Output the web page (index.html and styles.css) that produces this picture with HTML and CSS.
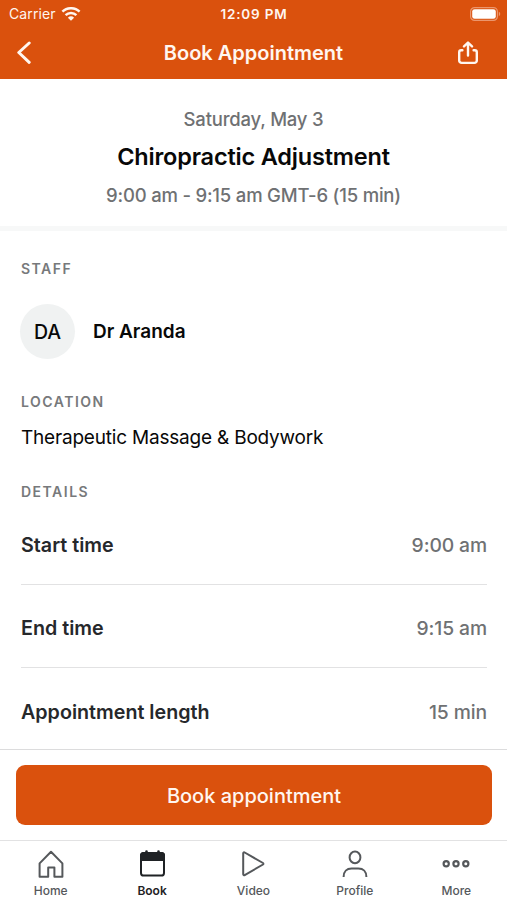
FILE: index.html
```html
<!DOCTYPE html>
<html lang="en">
<head>
  <meta charset="UTF-8">
  <meta name="viewport" content="width=device-width, initial-scale=1">
  <title>Book Appointment</title>
  <link rel="stylesheet" href="styles.css">
</head>
<body>
  <div class="app">
    <header class="header">
      <div class="status-bar">
        <div class="carrier">
          <span>Carrier</span>
          <svg class="wifi" width="20" height="14" viewBox="0 0 20 14" fill="none" stroke="currentColor" stroke-width="2.5">
            <path d="M1.4 4.7a12.4 12.4 0 0 1 17.2 0" />
            <path d="M4.6 8.2a7.8 7.8 0 0 1 10.8 0" />
            <path d="M10 13.8 6.9 10.7a4.5 4.5 0 0 1 6.2 0z" fill="currentColor" stroke="none" />
          </svg>
        </div>
        <span class="clock">12:09 PM</span>
        <svg class="battery" width="31" height="14" viewBox="0 0 31 14">
          <rect x=".6" y=".6" width="26.8" height="12.8" rx="4" fill="none" stroke="#eb966d" stroke-width="1.2" />
          <rect x="2.2" y="2.2" width="23.6" height="9.6" rx="2.4" fill="#fff" />
          <path d="M28.8 4.8a2.4 2.4 0 0 1 0 4.4z" fill="#eb966d" />
        </svg>
      </div>
      <div class="nav-bar">
        <button class="icon-btn" aria-label="Back">
          <svg width="16" height="24" viewBox="0 0 16 24" fill="none" stroke="currentColor" stroke-width="3" stroke-linecap="round" stroke-linejoin="round">
            <path d="M13.2 2 2.8 11.5l10.4 9.8" />
          </svg>
        </button>
        <h1>Book Appointment</h1>
        <button class="icon-btn" aria-label="Share">
          <svg width="22" height="24" viewBox="0 0 22 24" fill="none" stroke="currentColor" stroke-width="2.4" stroke-linecap="round" stroke-linejoin="round">
            <path d="M5.4 9.3H4.2a2 2 0 0 0-2 2v8.2a2.4 2.4 0 0 0 2.4 2.4h12.8a2.4 2.4 0 0 0 2.4-2.4v-8.2a2 2 0 0 0-2-2h-1.2" />
            <path d="M11 14.5V2M7 5.4 11 1.5l4 3.9" />
          </svg>
        </button>
      </div>
    </header>

    <section class="summary">
      <p class="summary-date">Saturday, May 3</p>
      <h2>Chiropractic Adjustment</h2>
      <p class="summary-time">9:00 am - 9:15 am GMT-6 (15 min)</p>
    </section>

    <main class="content">
      <h3>Staff</h3>
      <div class="staff">
        <div class="avatar">DA</div>
        <span class="staff-name">Dr Aranda</span>
      </div>

      <h3>Location</h3>
      <p class="location">Therapeutic Massage &amp; Bodywork</p>

      <h3>Details</h3>
      <dl class="details">
        <div class="row">
          <dt>Start time</dt>
          <dd>9:00 am</dd>
        </div>
        <div class="row">
          <dt>End time</dt>
          <dd>9:15 am</dd>
        </div>
        <div class="row">
          <dt>Appointment length</dt>
          <dd>15 min</dd>
        </div>
      </dl>
    </main>

    <div class="action">
      <button class="book-btn">Book appointment</button>
    </div>

    <nav class="tabs">
      <a class="tab">
        <svg width="30" height="30" viewBox="0 0 30 30" fill="none" stroke="currentColor" stroke-width="2" stroke-linejoin="round">
          <path d="M3.6 27.8V14.4L15 2.8l11.4 11.6v13.4h-8v-9.4h-6.2v9.4z" />
        </svg>
        <span>Home</span>
      </a>
      <a class="tab active">
        <svg width="30" height="30" viewBox="0 0 30 30" fill="none" stroke="currentColor" stroke-width="2" stroke-linecap="round">
          <rect x="4" y="4" width="23" height="22.5" rx="2.6" />
          <path d="M4 11.1V6.600a2.600 2.600 0 0 1 2.600-2.600h17.800a2.600 2.600 0 0 1 2.600 2.600v4.500z" fill="currentColor" />
          <path d="M9.500 4.500V2.500M21.500 4.500V2.500" stroke-width="2.600" />
        </svg>
        <span>Book</span>
      </a>
      <a class="tab">
        <svg width="30" height="30" viewBox="0 0 30 30" fill="none" stroke="currentColor" stroke-width="2" stroke-linejoin="round">
          <path d="M5.2 4.3v21a1 1 0 0 0 1.5.8L25 15.5a.9.9 0 0 0 0-1.5L6.7 3.5a1 1 0 0 0-1.5.8z" />
        </svg>
        <span>Video</span>
      </a>
      <a class="tab">
        <svg width="30" height="30" viewBox="0 0 30 30" fill="none" stroke="currentColor" stroke-width="2">
          <ellipse cx="15" cy="8.4" rx="5.4" ry="5.8" />
          <path d="M3.6 28c0-5.4 3.2-8.4 8-8.4h6.8c4.8 0 8 3 8 8.4" />
        </svg>
        <span>Profile</span>
      </a>
      <a class="tab">
        <svg width="30" height="30" viewBox="0 0 30 30" fill="none" stroke="currentColor" stroke-width="2.2">
          <circle cx="5.2" cy="14.8" r="2.6" />
          <circle cx="15" cy="14.8" r="2.6" />
          <circle cx="24.8" cy="14.8" r="2.6" />
        </svg>
        <span>More</span>
      </a>
    </nav>
  </div>
</body>
</html>
```

FILE: styles.css
```css
:root {
  --primary-color: #da510d;
  --text-color: #26282b;
  --muted-color: #6f7173;
  --border-color: #e2e2e3;
}

* {
  box-sizing: border-box;
}

body {
  margin: 0;
  font-family: Inter, "Liberation Sans", sans-serif;
  color: #080808;
  background: #fff;
}

h1, h2, h3, p, dl, dd {
  margin: 0;
}

button {
  border: none;
  padding: 0;
  font-family: inherit;
  cursor: pointer;
}

svg {
  display: block;
}

.app {
  display: flex;
  flex-direction: column;
  height: 900px;
  overflow: hidden;
}

/* header */
.header {
  height: 79px;
  background: var(--primary-color);
  color: #fff6f0;
}

.status-bar {
  display: grid;
  grid-template-columns: 1fr auto 1fr;
  align-items: center;
  height: 27px;
  padding: 0 6px 0 9px;
  font-size: 14px;
}

.carrier {
  display: flex;
  align-items: center;
  gap: 5px;
  letter-spacing: 0.1px;
}

.clock {
  margin-left: -2px;
  font-size: 13.5px;
  font-weight: 600;
  letter-spacing: 0.8px;
}

.battery {
  justify-self: end;
}

.nav-bar {
  display: grid;
  grid-template-columns: 1fr auto 1fr;
  align-items: center;
  height: 51px;
  padding: 0 28px 0 16px;
}

.nav-bar h1 {
  margin-left: 12px;
  font-size: 20px;
  font-weight: 600;
}

.icon-btn {
  background: none;
  color: inherit;
}

.icon-btn:first-child {
  justify-self: start;
}

.icon-btn:last-child {
  justify-self: end;
}

/* appointment summary */
.summary {
  height: 152px;
  padding-top: 28px;
  border-bottom: 5px solid #f7f8f8;
  text-align: center;
}

.summary p {
  font-size: 18.5px;
  line-height: 24px;
  font-weight: 500;
  letter-spacing: -0.2px;
  color: var(--muted-color);
}

.summary h2 {
  margin: 11px 0;
  font-size: 23.5px;
  line-height: 30px;
  font-weight: 600;
  letter-spacing: -0.18px;
}

/* content */
.content {
  flex: 1;
  min-height: 0;
  padding: 28px 20px 0 21px;
}

.content h3 {
  font-size: 14px;
  line-height: 20px;
  font-weight: 600;
  letter-spacing: 1.5px;
  text-transform: uppercase;
  color: #77797b;
}

.staff {
  display: flex;
  align-items: center;
  gap: 18px;
  margin: 25px 0 33px;
}

.avatar {
  display: flex;
  align-items: center;
  justify-content: center;
  width: 55px;
  height: 55px;
  margin-left: -1px;
  border-radius: 50%;
  background: #f0f2f2;
  font-size: 19.5px;
  font-weight: 500;
}

.staff-name {
  font-size: 19px;
  font-weight: 600;
}

.location {
  margin: 13px 0 32px;
  font-size: 19px;
  line-height: 25px;
  letter-spacing: -0.2px;
}

.details {
  margin-top: -1px;
}

.row {
  display: flex;
  align-items: center;
  justify-content: space-between;
  height: 83.5px;
  padding-top: 5px;
  border-bottom: 1px solid var(--border-color);
  font-size: 19.3px;
}

.row:last-child {
  border-bottom: none;
}

.row dt {
  font-size: 19.7px;
  font-weight: 600;
  color: var(--text-color);
}

.row dd {
  font-weight: 500;
  letter-spacing: -0.1px;
  color: var(--muted-color);
}

/* bottom action */
.action {
  flex: none;
  height: 91px;
  padding: 15px 15px 0 16px;
  border-top: 1px solid #dcdcdd;
  background: #fff;
}

.book-btn {
  display: block;
  width: 100%;
  height: 60px;
  padding-top: 1px;
  border-radius: 9px;
  background: var(--primary-color);
  color: #fff6f0;
  font-size: 20px;
  font-weight: 500;
}

.tabs {
  flex: none;
  display: grid;
  grid-template-columns: repeat(5, 1fr);
  height: 60px;
  padding-top: 8px;
  border-top: 1px solid var(--border-color);
  background: #fff;
}

.tab {
  display: flex;
  flex-direction: column;
  align-items: center;
  gap: 4px;
  font-size: 12px;
  line-height: 16px;
  font-weight: 500;
  color: #55585b;
}

.tab.active {
  color: #1f2225;
  font-weight: 600;
}
```
